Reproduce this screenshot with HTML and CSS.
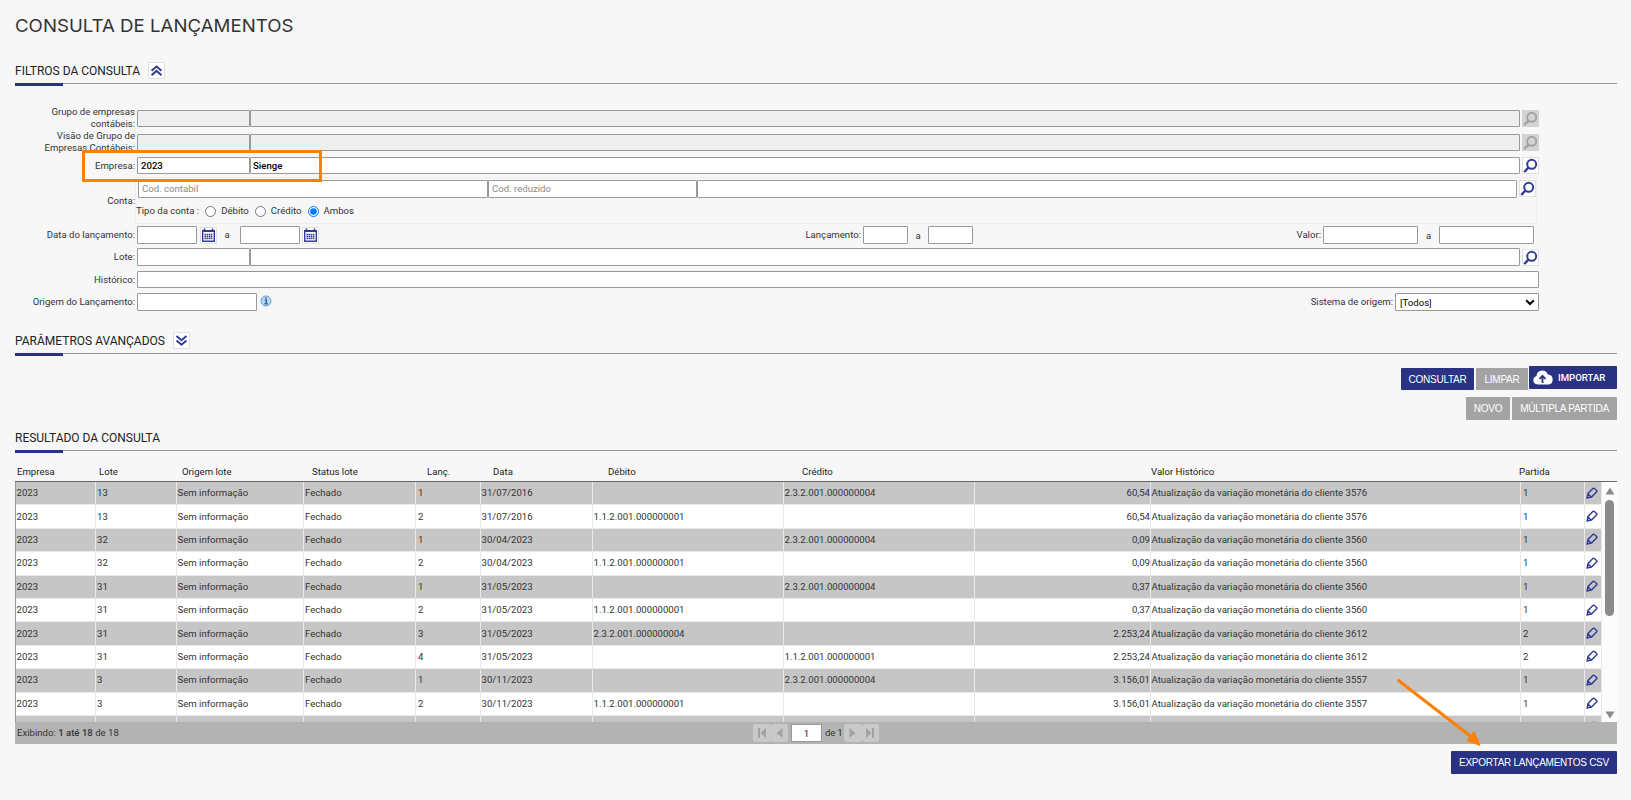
FILE: index.html
```html
<!DOCTYPE html>
<html lang="pt-BR">

<head>
    <meta charset="UTF-8">
    <meta name="viewport" content="width=device-width, initial-scale=1.0">
    <title>Consulta de Lançamentos</title>
    <link rel="stylesheet" href="styles.css">
</head>

<body>
    <!-- Icons -->
    <svg class="sprite">
        <symbol id="i-search" viewBox="0 0 17 17">
            <circle cx="9.700" cy="7.300" r="4.500" fill="none" stroke="currentColor" stroke-width="2" />
            <path d="M6.400 10.600L2.200 15" fill="none" stroke="currentColor" stroke-width="2.400" />
        </symbol>
        <symbol id="i-calendar" viewBox="0 0 17 17">
            <path d="M2.700 3.700h11.600v10.600H2.700z" fill="none" stroke="currentColor" stroke-width="1.400" />
            <path d="M2 3h13v2H2z" fill="currentColor" />
            <path d="M4.500 1.500v2M12.500 1.500v2" stroke="currentColor" stroke-width="1.600" />
            <path d="M4.500 7.500h8M4.500 9.500h8M4.500 11.500h8" stroke="currentColor" stroke-width="1.400" stroke-dasharray="1.600 .5" />
        </symbol>
        <symbol id="i-up" viewBox="0 0 17 17">
            <path d="M3.500 8.800l5-4.300 5 4.300M3.500 13.200l5-4.300 5 4.300" fill="none" stroke="currentColor" stroke-width="2" />
        </symbol>
        <symbol id="i-down" viewBox="0 0 17 17">
            <path d="M3.500 4l5 4.300 5-4.300M3.500 8.400l5 4.300 5-4.300" fill="none" stroke="currentColor" stroke-width="2" />
        </symbol>
        <symbol id="i-edit" viewBox="0 0 12 12">
            <path d="M1.200 10.900L1.900 6.700 6.800 1.600Q7.600.9 8.400 1.500L10.800 3.600Q11.200 4.200 10.700 4.800L5.500 10zM2 7l3.200 2.900" fill="none" stroke="currentColor" stroke-width="1.400" />
            <path d="M.6 11.500l.6-2.800 2.300 2.100z" fill="currentColor" />
        </symbol>
    </svg>

    <h1 class="title">CONSULTA DE LANÇAMENTOS</h1>

    <h2 class="section section-filters">FILTROS DA CONSULTA
        <button class="icon-btn"><svg><use href="#i-up" /></svg></button>
    </h2>

    <form class="filters">
        <div class="row row-tall">
            <label>Grupo de empresas<br>contábeis:</label>
            <input class="code" disabled><input class="grow" disabled>
            <button type="button" class="icon-btn off"><svg><use href="#i-search" /></svg></button>
        </div>
        <div class="row row-tall">
            <label>Visão de Grupo de<br>Empresas Contábeis:</label>
            <input class="code" disabled><input class="grow" disabled>
            <button type="button" class="icon-btn off"><svg><use href="#i-search" /></svg></button>
        </div>
        <div class="row row-company">
            <label>Empresa:</label>
            <input class="code strong" value="2023"><input class="grow strong" value="Sienge">
            <button type="button" class="icon-btn"><svg><use href="#i-search" /></svg></button>
            <span class="highlight"></span>
        </div>
        <div class="row row-account">
            <label>Conta:</label>
            <div class="account">
                <div class="account-line">
                    <input class="account-code" placeholder="Cod. contabil"><input class="account-short" placeholder="Cod. reduzido"><input class="grow">
                    <button type="button" class="icon-btn"><svg><use href="#i-search" /></svg></button>
                </div>
                <div class="radios">
                    <span>Tipo da conta :</span>
                    <input type="radio" name="tipo"><span>Débito</span>
                    <input type="radio" name="tipo"><span>Crédito</span>
                    <input type="radio" name="tipo" checked><span>Ambos</span>
                </div>
            </div>
        </div>
        <div class="row tall">
            <label>Data do lançamento:</label>
            <input class="date">
            <button type="button" class="icon-btn cal"><svg><use href="#i-calendar" /></svg></button>
            <span class="to to-date">a</span>
            <input class="date">
            <button type="button" class="icon-btn cal-end"><svg><use href="#i-calendar" /></svg></button>
            <label class="lbl-entry">Lançamento:</label>
            <input class="entry"><span class="to to-entry">a</span><input class="entry">
            <label class="lbl-value">Valor:</label>
            <input class="value"><span class="to to-value">a</span><input class="value">
        </div>
        <div class="row tall">
            <label>Lote:</label>
            <input class="code"><input class="grow">
            <button type="button" class="icon-btn"><svg><use href="#i-search" /></svg></button>
        </div>
        <div class="row row-history">
            <label>Histórico:</label>
            <input class="grow">
        </div>
        <div class="row tall">
            <label>Origem do Lançamento:</label>
            <input class="origin">
            <svg class="info" viewBox="0 0 12 12">
                <circle cx="6" cy="6" r="5" fill="#b5d8f3" stroke="#6a9fce" />
                <path d="M6 2.500v1.500M4.800 5.300h1.500v3.200M4.500 8.700h3.200" fill="none" stroke="#2b5f95" stroke-width="1.400" />
            </svg>
            <label class="lbl-system">Sistema de origem:</label>
            <div class="select">[Todos]
                <svg viewBox="0 0 10 7"><path d="M1.200 1.200L5 5l3.800-3.800" fill="none" stroke="#000" stroke-width="2" /></svg>
            </div>
        </div>
    </form>

    <h2 class="section section-params">PARÂMETROS AVANÇADOS
        <button class="icon-btn"><svg><use href="#i-down" /></svg></button>
    </h2>

    <div class="actions actions-top">
        <button class="btn b-search">CONSULTAR</button>
        <button class="btn grey b-clear">LIMPAR</button>
        <button class="btn b-import">
            <svg viewBox="0 0 20 15">
                <path d="M5 14.500Q.3 14 .3 10 .4 7 3.500 6 3.800.5 9.300.4q4.200.1 5.500 4 4.700.2 4.900 5-.2 4.700-4.700 5.100z" fill="#fff" />
                <path d="M9.500 13V6M6.500 9l3-3.200 3 3.200" fill="none" stroke="#2a3284" stroke-width="1.800" />
            </svg>
            IMPORTAR
        </button>
    </div>
    <div class="actions actions-bottom">
        <button class="btn grey b-new">NOVO</button>
        <button class="btn grey b-multi">MÚLTIPLA PARTIDA</button>
    </div>

    <h2 class="section section-result">RESULTADO DA CONSULTA</h2>

    <div class="grid-head">
        <span>Empresa</span><span>Lote</span><span>Origem lote</span><span>Status lote</span><span>Lanç.</span><span>Data</span><span>Débito</span><span>Crédito</span><span>Valor Histórico</span><span>Partida</span>
    </div>

    <div class="grid-body">
        <div class="lines">
            <div class="line"><span>2023</span><span>13</span><span>Sem informação</span><span>Fechado</span><span>1</span><span>31/07/2016</span><span></span><span>2.3.2.001.000000004</span><span>60,54</span><span>Atualização da variação monetária do cliente 3576</span><span>1</span><span><svg><use href="#i-edit" /></svg></span></div>
            <div class="line"><span>2023</span><span>13</span><span>Sem informação</span><span>Fechado</span><span>2</span><span>31/07/2016</span><span>1.1.2.001.000000001</span><span></span><span>60,54</span><span>Atualização da variação monetária do cliente 3576</span><span>1</span><span><svg><use href="#i-edit" /></svg></span></div>
            <div class="line"><span>2023</span><span>32</span><span>Sem informação</span><span>Fechado</span><span>1</span><span>30/04/2023</span><span></span><span>2.3.2.001.000000004</span><span>0,09</span><span>Atualização da variação monetária do cliente 3560</span><span>1</span><span><svg><use href="#i-edit" /></svg></span></div>
            <div class="line"><span>2023</span><span>32</span><span>Sem informação</span><span>Fechado</span><span>2</span><span>30/04/2023</span><span>1.1.2.001.000000001</span><span></span><span>0,09</span><span>Atualização da variação monetária do cliente 3560</span><span>1</span><span><svg><use href="#i-edit" /></svg></span></div>
            <div class="line"><span>2023</span><span>31</span><span>Sem informação</span><span>Fechado</span><span>1</span><span>31/05/2023</span><span></span><span>2.3.2.001.000000004</span><span>0,37</span><span>Atualização da variação monetária do cliente 3560</span><span>1</span><span><svg><use href="#i-edit" /></svg></span></div>
            <div class="line"><span>2023</span><span>31</span><span>Sem informação</span><span>Fechado</span><span>2</span><span>31/05/2023</span><span>1.1.2.001.000000001</span><span></span><span>0,37</span><span>Atualização da variação monetária do cliente 3560</span><span>1</span><span><svg><use href="#i-edit" /></svg></span></div>
            <div class="line"><span>2023</span><span>31</span><span>Sem informação</span><span>Fechado</span><span>3</span><span>31/05/2023</span><span>2.3.2.001.000000004</span><span></span><span>2.253,24</span><span>Atualização da variação monetária do cliente 3612</span><span>2</span><span><svg><use href="#i-edit" /></svg></span></div>
            <div class="line"><span>2023</span><span>31</span><span>Sem informação</span><span>Fechado</span><span>4</span><span>31/05/2023</span><span></span><span>1.1.2.001.000000001</span><span>2.253,24</span><span>Atualização da variação monetária do cliente 3612</span><span>2</span><span><svg><use href="#i-edit" /></svg></span></div>
            <div class="line"><span>2023</span><span>3</span><span>Sem informação</span><span>Fechado</span><span>1</span><span>30/11/2023</span><span></span><span>2.3.2.001.000000004</span><span>3.156,01</span><span>Atualização da variação monetária do cliente 3557</span><span>1</span><span><svg><use href="#i-edit" /></svg></span></div>
            <div class="line"><span>2023</span><span>3</span><span>Sem informação</span><span>Fechado</span><span>2</span><span>30/11/2023</span><span>1.1.2.001.000000001</span><span></span><span>3.156,01</span><span>Atualização da variação monetária do cliente 3557</span><span>1</span><span><svg><use href="#i-edit" /></svg></span></div>
            <div class="line"><span></span><span></span><span></span><span></span><span></span><span></span><span></span><span></span><span></span><span></span><span></span><span><svg><use href="#i-edit" /></svg></span></div>
        </div>
        <div class="scrollbar">
            <svg viewBox="0 0 10 8"><path d="M5 .5L9.500 7.500H.5z" fill="#8b8b8b" /></svg>
            <div class="thumb"></div>
            <svg class="arrow-down" viewBox="0 0 10 8"><path d="M5 7.500L9.500.5H.5z" fill="#8b8b8b" /></svg>
        </div>
    </div>

    <div class="pager">
        <span class="showing">Exibindo: <b>1 até 18</b> de 18</span>
        <button class="nav"><svg viewBox="0 0 9 12"><path d="M1 1h2v10H1zM9 1v10L3.500 6z" /></svg></button>
        <button class="nav"><svg viewBox="0 0 9 12"><path d="M7.500 1v10L1.500 6z" /></svg></button>
        <input class="page" value="1">
        <span class="of">de 1</span>
        <button class="nav"><svg viewBox="0 0 9 12"><path d="M1.500 1v10l6-5z" /></svg></button>
        <button class="nav"><svg viewBox="0 0 9 12"><path d="M6 1h2v10H6zM0 1v10l5.500-5z" /></svg></button>
    </div>

    <div class="actions actions-export">
        <button class="btn b-export">EXPORTAR LANÇAMENTOS CSV</button>
    </div>

    <svg class="pointer" viewBox="0 0 90 72">
        <path d="M3.500 3.500L74 58" stroke="#ff8000" stroke-width="3" stroke-linecap="round" />
        <path d="M85 68.500L72 63.500 79 54.500z" fill="#ff8000" stroke="#ff8000" />
    </svg>
</body>

</html>
```

FILE: styles.css
```css
* {
    margin: 0;
    padding: 0;
    box-sizing: border-box;
}

body {
    position: relative;
    display: flex;
    flex-direction: column;
    height: 800px;
    padding: 14px 14px 0 15px;
    background: #f7f7f7;
    color: #333;
    font-family: Roboto, sans-serif;
    font-size: 9.6px;
    overflow: hidden;
}

button,
input {
    font-family: inherit;
    font-size: 9.6px;
    border: none;
}

.sprite {
    position: absolute;
    width: 0;
    height: 0;
}

.title {
    align-self: flex-start;
    height: 24px;
    font-family: Inter, sans-serif;
    font-size: 17.6px;
    font-weight: 400;
    line-height: 24px;
    transform: scaleX(1.06);
    transform-origin: left;
}

/* Section headings with the short blue bar */
.section {
    position: relative;
    display: flex;
    align-items: center;
    flex: none;
    height: 22px;
    padding-bottom: 4px;
    border-bottom: 1px solid #999;
    color: #222;
    font-size: 12px;
    font-weight: 400;
}

.section::after {
    content: "";
    position: absolute;
    left: 0;
    bottom: -3px;
    width: 48px;
    height: 3px;
    background: #2a3284;
}

.section .icon-btn {
    margin-left: 8px;
}

.section-filters {
    margin-top: 24px;
}

.section-params {
    margin-top: 19px;
}

.section-result {
    margin-top: 9px;
}

.icon-btn {
    flex: none;
    width: 17px;
    height: 17px;
    background: #fff;
    border: 1px solid #e0e0e0;
    color: #333c94;
}

.icon-btn svg {
    display: block;
    width: 17px;
    height: 17px;
    margin: -1px;
}

.icon-btn.off {
    background: #d3d3d3;
    border-color: #d3d3d3;
    color: #a3a3a3;
}

/* Filters */
.filters {
    display: flex;
    flex-direction: column;
    width: 1524px;
    margin-top: 22px;
}

.row {
    position: relative;
    display: flex;
    align-items: center;
    height: 22px;
}

.row label {
    flex: none;
    width: 120px;
    margin-right: 2px;
    line-height: 12px;
    text-align: right;
}

.row input:not([type]) {
    height: 17px;
    padding: 0 3px;
    border: 1px solid #999;
    border-radius: 1px;
    background: #fff;
    color: #000;
}

.row.tall input:not([type]) {
    height: 18px;
}

.row input:not([type]):disabled {
    background: #efefef;
}

.row input.strong {
    font-weight: 500;
}

.row input.grow.strong {
    padding-left: 2px;
}

.row > .icon-btn {
    margin-left: 2px;
}

.row-tall {
    height: 25px;
    margin-bottom: -1px;
}

.row-tall label {
    margin-top: -2px;
}

.row-company {
    z-index: 1;
    height: 21px;
    margin-top: 1px;
}

.row-account {
    height: 48px;
}

.row-account > label {
    margin-top: 2px;
}

.row-history {
    height: 23px;
}

.code {
    width: 113px;
}

.grow {
    flex: 1;
    min-width: 0;
}

.highlight {
    position: absolute;
    left: 67px;
    top: -5px;
    width: 240px;
    height: 32px;
    border: 3px solid #ff8000;
}

.account {
    width: 1402px;
    height: 47px;
    margin: 1px 0 0 -2px;
    padding: 2px 0 0 2px;
    border: 1px solid #eee;
}

.account-line {
    display: flex;
}

.account-line input:not([type]) {
    height: 18px;
    padding-bottom: 1px;
}

.account-code {
    width: 350px;
}

.account-short {
    width: 209px;
}

.account-line .icon-btn {
    margin-left: 2px;
}

.account ::placeholder {
    color: #8a8a8a;
}

.radios {
    display: flex;
    align-items: center;
    height: 25px;
    margin-left: -2px;
}

.radios input {
    width: 11px;
    height: 11px;
    margin: 1px 5px 0 6px;
}

.row .date {
    width: 60px;
}

.to {
    text-align: center;
}

.row > .cal {
    margin-left: 3px;
}

.to-date {
    width: 23px;
    margin-top: -1px;
    padding-right: 3px;
}

.cal-end {
    margin-right: 425px;
}

.row .lbl-entry {
    width: 117px;
}

.entry {
    width: 45px;
}

.to-entry {
    width: 20px;
}

.row .lbl-value {
    width: 348px;
}

.value {
    width: 95px;
}

.to-value {
    width: 21px;
}

.origin {
    width: 120px;
}

.info {
    width: 12px;
    height: 12px;
    margin-left: 3px;
    margin-top: -2px;
}

.row .lbl-system {
    margin-left: auto;
}

.select {
    display: flex;
    align-items: center;
    justify-content: space-between;
    width: 144px;
    height: 18px;
    padding: 0 3px 0 4px;
    border: 1px solid #999;
    border-radius: 1px;
    background: #fff;
    color: #000;
}

.select svg {
    width: 10px;
    height: 7px;
}

/* Buttons */
.actions {
    display: flex;
    justify-content: flex-end;
    align-items: flex-end;
    flex: none;
}

.btn {
    height: 23px;
    border-radius: 1px;
    background: #2a3284;
    color: #fff;
    font-family: "Liberation Sans", sans-serif;
    font-size: 10px;
    letter-spacing: -0.26px;
    white-space: nowrap;
}

.btn.grey {
    background: #a3a3a3;
}

.actions-top {
    height: 24px;
    margin-top: 12px;
}

.b-search {
    width: 73px;
    height: 22px;
    margin-right: 2px;
}

.b-clear {
    width: 52px;
    height: 22px;
    margin-right: 1px;
}

.b-import {
    display: flex;
    align-items: center;
    width: 88px;
    margin-bottom: 1px;
    padding-left: 4px;
    font-family: Roboto, sans-serif;
    font-size: 9.6px;
    font-weight: 500;
    letter-spacing: 0;
}

.b-import svg {
    width: 20px;
    height: 15px;
    margin-right: 5px;
}

.actions-bottom {
    gap: 2px;
    margin-top: 7px;
}

.b-new {
    width: 44px;
}

.b-multi {
    width: 105px;
}

.actions-export {
    margin-top: 7px;
}

.b-export {
    width: 166px;
}

/* Result list */
.grid-head {
    display: grid;
    grid-template-columns: 82px 83px 130px 115px 66px 115px 194px 349px 368px auto;
    align-items: center;
    flex: none;
    height: 31px;
    padding: 11px 0 0 2px;
    border-bottom: 1px solid #666;
    color: #222;
}

.grid-body {
    display: flex;
    flex: none;
    height: 240px;
    overflow: hidden;
}

.lines {
    width: 1587px;
    border-left: 1px solid #999;
}

.line {
    display: grid;
    grid-template-columns: 80px 81px 127px 112px 65px 112px 191px 191px 176px 370px 64px 17px;
    height: 23.4px;
    background: #fff;
    border-bottom: 1px solid #e9e9e9;
}

.line:nth-child(odd) {
    background: #c6c6c6;
}

.line span {
    display: flex;
    align-items: center;
    padding: 0 0 1px 0.5px;
    border-right: 1px solid #e9e9e9;
    white-space: nowrap;
}

.line span:nth-child(2),
.line span:nth-child(4) {
    padding-left: 1px;
}

.line span:nth-child(5),
.line span:nth-child(11) {
    padding-left: 2px;
}

.line span:nth-child(9) {
    justify-content: flex-end;
}

.line svg {
    width: 12px;
    height: 12px;
    color: #333c94;
}

.scrollbar {
    display: flex;
    flex-direction: column;
    align-items: center;
    width: 15px;
    padding: 5px 0 3px;
    background: #fcfcfc;
}

.scrollbar svg {
    width: 10px;
    height: 8px;
}

.thumb {
    width: 9px;
    height: 116px;
    margin-top: 5px;
    border-radius: 5px;
    background: #8b8b8b;
}

.arrow-down {
    margin-top: auto;
}

.pager {
    display: flex;
    align-items: center;
    flex: none;
    height: 22px;
    padding-left: 2px;
    background: #b3b3b3;
}

.showing {
    width: 736px;
    padding-bottom: 1px;
}

.showing b {
    font-weight: 500;
}

.nav {
    display: flex;
    align-items: center;
    justify-content: center;
    width: 17.5px;
    height: 18px;
    border-radius: 3px;
    background: #c9c9c9;
}

.nav svg {
    width: 9px;
    height: 12px;
    fill: #a3a3a3;
}

.page {
    width: 31px;
    height: 18px;
    margin: 0 3px;
    border: 1px solid #999;
    background: #fff;
    color: #222;
    text-align: center;
}

.of {
    width: 19px;
    padding-bottom: 1px;
    letter-spacing: -0.2px;
    white-space: nowrap;
}

/* Arrow pointing at the export button */
.pointer {
    position: absolute;
    left: 1395px;
    top: 677px;
    width: 90px;
    height: 72px;
}
```
